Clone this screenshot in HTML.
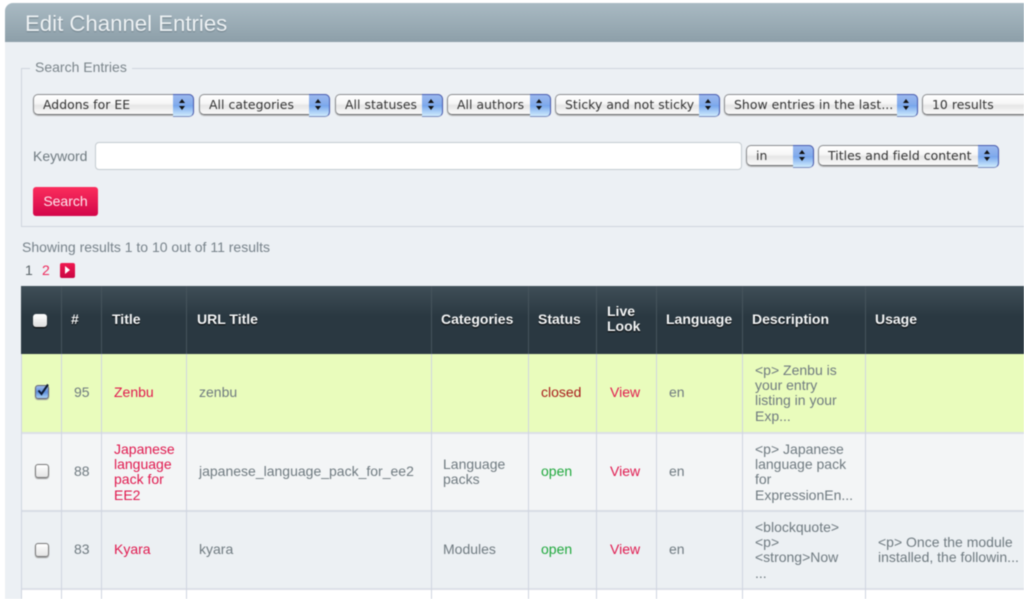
<!DOCTYPE html>
<html><head><meta charset="utf-8"><title>Edit Channel Entries</title>
<style>
html,body{margin:0;padding:0;background:#fff}
#w{position:relative;width:1024px;height:599px;overflow:hidden;font-family:"Liberation Sans",sans-serif;font-size:14px;color:#6f7a80;filter:blur(.4px)}
#w div{position:absolute;box-sizing:border-box}
.s{height:21px;top:94px;border:1px solid #8b8d90;border-bottom-color:#6f7174;border-radius:5px;background:linear-gradient(#fff,#f6f6f6 45%,#e6e6e6 55%,#fafafa);font:12.4px/19px "DejaVu Sans",sans-serif;letter-spacing:.05px;color:#333;padding-left:9px;white-space:nowrap;box-shadow:0 1px 1px #b5b5b5}
.s i{position:absolute;right:-1px;top:-1px;width:20px;height:21px;border:1px solid #4a5cb0;border-bottom-color:#7d8fc0;border-left:0;border-radius:0 5px 5px 0;background:linear-gradient(#9ab8ee,#82abec 45%,#76a5ec 50%,#d0ecfd)}
.s i:before,.s i:after{content:"";position:absolute;left:6px;border-left:3px solid transparent;border-right:3px solid transparent}
.s i:before{top:4px;border-bottom:4px solid #111}
.s i:after{top:11px;border-top:4px solid #111}
.t{white-space:nowrap}
.h{color:#f4f6f7;font-weight:bold;font-size:14px;line-height:15px;text-shadow:0 1px 1px #000}
.r{color:#e0194e}
.v{width:1px;background:#cfd5e0}
.hv{width:1px;background:#46545c;top:286px;height:68px}
.d{line-height:15.2px}
.cb{width:14px;height:14px;border:1px solid #777;border-radius:3px;background:linear-gradient(#fff,#e4e4e4);left:35px;box-shadow:0 1px 1px #999}
</style></head><body><div id="w">
<div style="left:5px;top:3px;width:1019px;height:596px;background:#ecf0f4;border-radius:8px 0 0 0"></div>
<div style="left:5px;top:3px;width:1019px;height:39px;background:linear-gradient(#a9bac3,#8d9fa9);border-radius:8px 0 0 0"></div>
<div class="t" style="left:25px;top:11px;font-size:22.2px;line-height:26px;color:#eef2f4;text-shadow:0 1px 1px #6d7f89">Edit Channel Entries</div>

<div style="left:21px;top:68px;width:1010px;height:159px;border:1px solid #cfd5dd"></div>
<div class="t" style="left:30px;top:59px;padding:0 5px;background:#ecf0f4;line-height:16px;color:#7b858b">Search Entries</div>

<div class="s" style="left:33px;width:161px">Addons for EE<i></i></div>
<div class="s" style="left:199px;width:131px">All categories<i></i></div>
<div class="s" style="left:335px;width:108px">All statuses<i></i></div>
<div class="s" style="left:447px;width:104px">All authors<i></i></div>
<div class="s" style="left:555px;width:165px">Sticky and not sticky<i></i></div>
<div class="s" style="left:724px;width:194px">Show entries in the last...<i></i></div>
<div class="s" style="left:922px;width:130px">10 results</div>

<div class="t" style="left:33px;top:148px;line-height:16px;color:#6f7a80">Keyword</div>
<div style="left:95px;top:142px;width:647px;height:28px;background:#fff;border:1px solid #c4cbd0;border-radius:4px"></div>
<div class="s" style="left:746px;width:68px;top:145px">in<i></i></div>
<div class="s" style="left:818px;width:181px;top:145px">Titles and field content<i></i></div>

<div class="t" style="left:33px;top:187px;width:65px;height:29px;border-radius:3px;background:linear-gradient(#fb2d5c,#d3064a);color:#fde7ee;text-align:center;line-height:28px">Search</div>

<div class="t" style="left:22px;top:239px;line-height:16px;color:#77828a">Showing results 1 to 10 out of 11 results</div>
<div class="t" style="left:25px;top:262px;line-height:16px;color:#5a6468">1</div>
<div class="t r" style="left:42px;top:262px;line-height:16px;color:#ee2a5c">2</div>
<div style="left:60px;top:263px;width:15px;height:15px;background:linear-gradient(#f0184f,#c90643);border-radius:2px"></div>
<div style="left:65px;top:266px;width:0;height:0;border-left:5px solid #fff;border-top:4.5px solid transparent;border-bottom:4.5px solid transparent"></div>

<!-- table header -->
<div style="left:21px;top:286px;width:1003px;height:68px;background:linear-gradient(#3f4e57,#2a3841 45%,#2a3841)"></div>
<div class="hv" style="left:61px"></div><div class="hv" style="left:101px"></div><div class="hv" style="left:186px"></div><div class="hv" style="left:431px"></div><div class="hv" style="left:528px"></div><div class="hv" style="left:596px"></div><div class="hv" style="left:656px"></div><div class="hv" style="left:742px"></div><div class="hv" style="left:865px"></div>
<div style="left:33px;top:314px;width:14px;height:13px;background:linear-gradient(#fff,#ddd);border-radius:3px;box-shadow:0 1px 1px #000"></div>
<div class="t h" style="left:71px;top:312px">#</div>
<div class="t h" style="left:112px;top:312px">Title</div>
<div class="t h" style="left:197px;top:312px">URL Title</div>
<div class="t h" style="left:441px;top:312px">Categories</div>
<div class="t h" style="left:538px;top:312px">Status</div>
<div class="t h" style="left:607px;top:304px">Live<br>Look</div>
<div class="t h" style="left:666px;top:312px">Language</div>
<div class="t h" style="left:752px;top:312px">Description</div>
<div class="t h" style="left:875px;top:312px">Usage</div>

<!-- rows -->
<div style="left:21px;top:354px;width:1003px;height:78px;background:#e9fcbc"></div>
<div style="left:21px;top:432px;width:1003px;height:2px;background:#dce0e7"></div>
<div style="left:21px;top:434px;width:1003px;height:76px;background:#f3f5f6"></div>
<div style="left:21px;top:510px;width:1003px;height:2px;background:#d8dde5"></div>
<div style="left:21px;top:512px;width:1003px;height:76px;background:#ecf0f3"></div>
<div style="left:21px;top:588px;width:1003px;height:2px;background:#dce0e7"></div>
<div style="left:21px;top:590px;width:1003px;height:9px;background:#fff"></div>
<div class="v" style="left:21px;top:354px;height:245px"></div>
<div class="v" style="left:61px;top:354px;height:245px"></div>
<div class="v" style="left:101px;top:354px;height:245px"></div>
<div class="v" style="left:186px;top:354px;height:245px"></div>
<div class="v" style="left:431px;top:354px;height:245px"></div>
<div class="v" style="left:528px;top:354px;height:245px"></div>
<div class="v" style="left:596px;top:354px;height:245px"></div>
<div class="v" style="left:656px;top:354px;height:245px"></div>
<div class="v" style="left:742px;top:354px;height:245px"></div>
<div class="v" style="left:865px;top:354px;height:245px"></div>

<!-- row 1 -->
<div class="cb" style="top:385px;background:linear-gradient(#9db9e8,#5f8fdd 50%,#a9d2f5);border-color:#667"></div>
<svg style="position:absolute;left:35px;top:382px" width="16" height="16" viewBox="0 0 16 16"><path d="M3.5 8.5L6.5 12L13 2.5" fill="none" stroke="#0d1a33" stroke-width="2"/></svg>
<div class="t" style="left:74px;top:384px;line-height:16px">95</div>
<div class="t r" style="left:114px;top:384px;line-height:16px">Zenbu</div>
<div class="t" style="left:199px;top:384px;line-height:16px">zenbu</div>
<div class="t" style="left:541px;top:384px;line-height:16px;color:#a81c1c">closed</div>
<div class="t r" style="left:610px;top:384px;line-height:16px">View</div>
<div class="t" style="left:669px;top:384px;line-height:16px">en</div>
<div class="t d" style="left:755px;top:363px">&lt;p&gt; Zenbu is<br>your entry<br>listing in your<br>Exp...</div>

<!-- row 2 -->
<div class="cb" style="top:464px"></div>
<div class="t" style="left:74px;top:463px;line-height:16px">88</div>
<div class="t r d" style="left:114px;top:442px">Japanese<br>language<br>pack for<br>EE2</div>
<div class="t" style="left:199px;top:463px;line-height:16px">japanese_language_pack_for_ee2</div>
<div class="t d" style="left:443px;top:457px">Language<br>packs</div>
<div class="t" style="left:541px;top:463px;line-height:16px;color:#1fa83c">open</div>
<div class="t r" style="left:610px;top:463px;line-height:16px">View</div>
<div class="t" style="left:669px;top:463px;line-height:16px">en</div>
<div class="t d" style="left:755px;top:442px">&lt;p&gt; Japanese<br>language pack<br>for<br>ExpressionEn...</div>

<!-- row 3 -->
<div class="cb" style="top:543px"></div>
<div class="t" style="left:74px;top:541px;line-height:16px">83</div>
<div class="t r" style="left:114px;top:541px;line-height:16px">Kyara</div>
<div class="t" style="left:199px;top:541px;line-height:16px">kyara</div>
<div class="t" style="left:443px;top:541px;line-height:16px">Modules</div>
<div class="t" style="left:541px;top:541px;line-height:16px;color:#1fa83c">open</div>
<div class="t r" style="left:610px;top:541px;line-height:16px">View</div>
<div class="t" style="left:669px;top:541px;line-height:16px">en</div>
<div class="t d" style="left:755px;top:520px">&lt;blockquote&gt;<br>&lt;p&gt;<br>&lt;strong&gt;Now<br>...</div>
<div class="t d" style="left:878px;top:535px">&lt;p&gt; Once the module<br>installed, the followin...</div>
</div></body></html>
